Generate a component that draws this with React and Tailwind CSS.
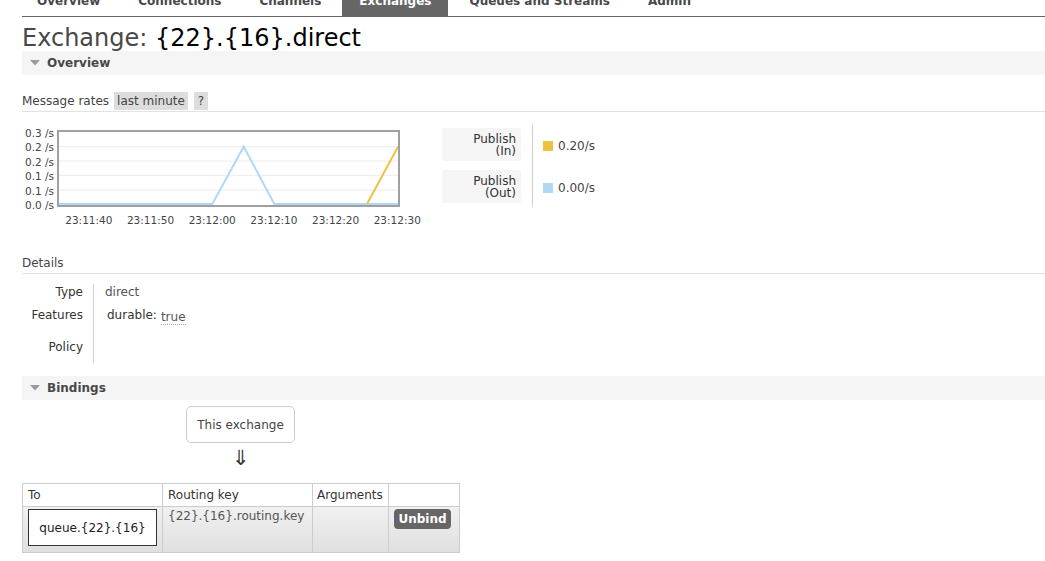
import React from "react";

const tabs = [
  { label: "Overview" },
  { label: "Connections" },
  { label: "Channels" },
  { label: "Exchanges", active: true },
  { label: "Queues and Streams" },
  { label: "Admin" },
];

function SectionHeader({ title }) {
  return (
    <div className="h-[24px] bg-[#f5f5f5] flex items-center pl-[8px]">
      <svg width="10" height="6" viewBox="0 0 10 6" className="mr-[7px]">
        <polygon points="0,0 10,0 5,5.5" fill="#9a9a9a" />
      </svg>
      <span className="font-bold text-[12px] text-[#484848] leading-[16px]">{title}</span>
    </div>
  );
}

function Chart() {
  const yLabels = ["0.3 /s", "0.2 /s", "0.2 /s", "0.1 /s", "0.1 /s", "0.0 /s"];
  const xLabels = ["23:11:40", "23:11:50", "23:12:00", "23:12:10", "23:12:20", "23:12:30"];
  return (
    <div className="w-[400px]">
      <div className="flex items-start">
        <div className="w-[35px] pr-[3px] -mt-[3px] h-[84px] flex flex-col justify-between text-right text-[10.5px] leading-[12px] text-[#444]">
          {yLabels.map((l, i) => (
            <div key={i}>{l}</div>
          ))}
        </div>
        <div className="w-[343px] h-[77px] border-2 border-[#a0a0a0]">
          <svg width="339" height="73" viewBox="0 0 339 73" className="block">
            {[14.7, 29, 43.3, 58].map((y) => (
              <line key={y} x1="0" x2="339" y1={y} y2={y} stroke="#ececec" strokeWidth="1" />
            ))}
            <polyline
              points="0,72 153.3,72 184.7,14.7 215.3,72 339,72"
              fill="none"
              stroke="#afd8f8"
              strokeWidth="2"
            />
            <polyline points="308,72 339,14.7" fill="none" stroke="#edc240" strokeWidth="2" />
          </svg>
        </div>
      </div>
      <div className="flex ml-[36px] mt-[3px] text-[10.5px] leading-[12px] text-[#444]">
        {xLabels.map((l) => (
          <div key={l} className="w-[61.7px] text-center shrink-0">
            {l}
          </div>
        ))}
      </div>
    </div>
  );
}

function Legend() {
  const rows = [
    { a: "Publish", b: "(In)", color: "bg-[#edc240]", value: "0.20/s" },
    { a: "Publish", b: "(Out)", color: "bg-[#afd8f8]", value: "0.00/s" },
  ];
  return (
    <div className="flex ml-[20px] mt-[12px]">
      <div className="flex flex-col gap-[9px] py-[4px]">
        {rows.map((r) => (
          <div
            key={r.b}
            className="w-[79px] h-[33px] bg-[#f5f5f5] rounded-[2px] flex flex-col justify-center items-end pr-[5px] text-[12px] leading-[12px] text-[#333]"
          >
            <div>{r.a}</div>
            <div>{r.b}</div>
          </div>
        ))}
      </div>
      <div className="ml-[11px] border-l border-[#cfcfcf] pl-[10px] flex flex-col gap-[9px] py-[4px]">
        {rows.map((r) => (
          <div key={r.b} className="h-[33px] flex items-center pt-[3px]">
            <span className={`w-[10px] h-[10px] ${r.color} mr-[5px]`} />
            <span className="text-[12px] text-[#444] leading-[14px]">{r.value}</span>
          </div>
        ))}
      </div>
    </div>
  );
}

export default function App() {
  return (
    <div className="w-[1045px] h-[561px] overflow-hidden bg-white font-['DejaVu_Sans',sans-serif] text-[#444]">
      {/* nav */}
      <div className="ml-[22px] h-[17px] border-b border-[#666] overflow-hidden">
        <div className="flex -ml-[2px] gap-[4px] h-[16px]">
          {tabs.map((t) => (
            <div
              key={t.label}
              className={`h-[16px] px-[17px] overflow-hidden ${t.active ? "bg-[#666] text-white" : "text-[#484848]"}`}
            >
              <div className="-mt-[7px] font-bold text-[12px] leading-[16px] whitespace-nowrap">{t.label}</div>
            </div>
          ))}
        </div>
      </div>

      <div className="pl-[22px]">
        <h1 className="mt-[9px] text-[24px] leading-[25px] font-normal text-[#484848] whitespace-nowrap">
          Exchange: <span className="text-black">{"{22}.{16}.direct"}</span>
        </h1>

        <SectionHeader title="Overview" />

        <div className="mt-[17px] flex items-center border-b border-[#e2e2e2] pb-[1px] text-[12px] leading-[18px]">
          <span className="text-[#444]">Message rates</span>
          <span className="ml-[5px] bg-[#dddddd] px-[3px] text-[#444]">last minute</span>
          <span className="ml-[6px] bg-[#dddddd] px-[4px] text-[#444]">?</span>
        </div>

        <div className="flex items-start">
          <div className="mt-[18px]">
            <Chart />
          </div>
          <Legend />
        </div>

        <div className="mt-[28px] text-[12px] leading-[19px] border-b border-[#e2e2e2] text-[#444]">Details</div>

        <div className="mt-[10px] flex text-[12px] leading-[17px]">
          <div className="w-[61px] text-right text-[#333]">
            <div className="h-[17px]">Type</div>
            <div className="h-[30px] pt-[6px]">Features</div>
            <div className="h-[32px] pt-[8px]">Policy</div>
          </div>
          <div className="ml-[10px] border-l border-[#d0d0d0] pl-[11px]">
            <div className="h-[17px] text-[#555]">direct</div>
            <div className="h-[30px] pt-[6px] pl-[2px] flex items-start">
              <span className="text-[#333]">durable:</span>
              <span className="ml-[4px] mt-[3px] text-[#555] leading-[14px] border-b border-dotted border-[#aaa]">true</span>
            </div>
            <div className="h-[32px]" />
          </div>
        </div>

        <div className="mt-[13px]">
          <SectionHeader title="Bindings" />
        </div>

        <div className="ml-[164px] w-[109px] mt-[6px]">
          <div className="h-[37px] border border-[#cccccc] rounded-[5px] flex items-center justify-center text-[12px] text-[#444]">
            This exchange
          </div>
          <div className="h-[31px] flex items-center justify-center text-[21px] leading-[21px] text-[#333]">⇓</div>
        </div>

        <table className="mt-[9px] border-collapse table-fixed w-[437px] text-[12px] text-[#333]">
          <colgroup>
            <col className="w-[140px]" />
            <col className="w-[150px]" />
            <col className="w-[76px]" />
            <col className="w-[71px]" />
          </colgroup>
          <thead>
            <tr className="h-[23px] bg-white">
              <th className="border border-[#cccccc] text-left font-normal pl-[5px] leading-[16px]">To</th>
              <th className="border border-[#cccccc] text-left font-normal pl-[5px] leading-[16px]">Routing key</th>
              <th className="border border-[#cccccc] text-left font-normal pl-[4px] leading-[16px]">Arguments</th>
              <th className="border border-[#cccccc]"></th>
            </tr>
          </thead>
          <tbody>
            <tr className="h-[46px] bg-gradient-to-b from-[#f1f1f1] to-[#dfdfdf]">
              <td className="border border-[#cccccc] align-top pl-[5px] pt-[2px]">
                <div className="w-[129px] h-[37px] bg-white border border-[#333] flex items-center justify-center text-[#222]">
                  {"queue.{22}.{16}"}
                </div>
              </td>
              <td className="border border-[#cccccc] align-top pl-[5px] pt-[2px] text-[#555] leading-[15px]">
                {"{22}.{16}.routing.key"}
              </td>
              <td className="border border-[#cccccc]"></td>
              <td className="border border-[#cccccc] align-top pl-[5px] pt-[2px]">
                <div className="w-[57px] h-[20px] rounded-[4px] bg-[#666] text-white font-bold flex items-center justify-center leading-[14px]">
                  Unbind
                </div>
              </td>
            </tr>
          </tbody>
        </table>
      </div>
    </div>
  );
}
